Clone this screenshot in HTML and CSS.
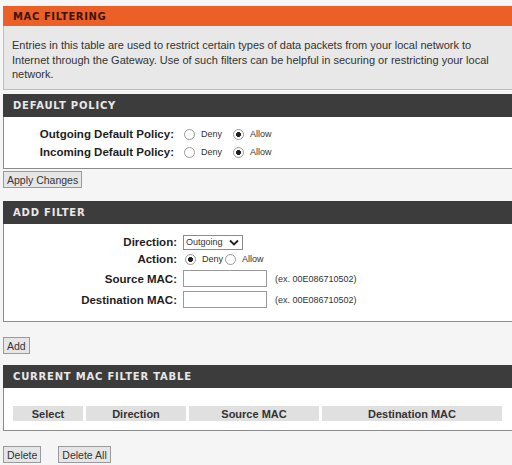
FILE: index.html
```html
<!DOCTYPE html>
<html>

<head>
  <title>MAC Filtering</title>
  <meta name="viewport" content="width=device-width, initial-scale=1" />
  <link rel="stylesheet" href="styles.css">
</head>

<body>

  <div class="page">

    <section class="intro">
      <h1 class="intro-head">MAC FILTERING</h1>
      <p class="intro-text">Entries in this table are used to restrict certain types of data packets from your local network to Internet through the Gateway. Use of such filters can be helpful in securing or restricting your local network.</p>
    </section>

    <section class="panel">
      <h2 class="panel-head">DEFAULT POLICY</h2>
      <div class="panel-body form policy">
        <span class="form-label">Outgoing Default Policy:</span>
        <div class="opts">
          <label class="opt"><input type="radio" name="out"> Deny</label>
          <label class="opt"><input type="radio" name="out" checked> Allow</label>
        </div>
        <span class="form-label">Incoming Default Policy:</span>
        <div class="opts">
          <label class="opt"><input type="radio" name="in"> Deny</label>
          <label class="opt"><input type="radio" name="in" checked> Allow</label>
        </div>
      </div>
    </section>

    <div class="actions actions-tight">
      <button class="btn">Apply Changes</button>
    </div>

    <section class="panel">
      <h2 class="panel-head">ADD FILTER</h2>
      <div class="panel-body form filter">
        <span class="form-label">Direction:</span>
        <div class="field">
          <div class="select">Outgoing
            <svg width="10" height="7" viewBox="0 0 10 7"><path d="M1 1.5 L5 5.5 L9 1.5" fill="none" stroke="#222" stroke-width="1.8"/></svg>
          </div>
        </div>
        <span class="form-label">Action:</span>
        <div class="field">
          <label class="opt"><input type="radio" name="act" checked> Deny</label><label class="opt"><input type="radio" name="act"> Allow</label>
        </div>
        <span class="form-label">Source MAC:</span>
        <div class="field">
          <input class="text-input" type="text">
          <span class="hint">(ex. 00E086710502)</span>
        </div>
        <span class="form-label">Destination MAC:</span>
        <div class="field">
          <input class="text-input" type="text">
          <span class="hint">(ex. 00E086710502)</span>
        </div>
      </div>
    </section>

    <div class="actions actions-add">
      <button class="btn">Add</button>
    </div>

    <section class="panel">
      <h2 class="panel-head">CURRENT MAC FILTER TABLE</h2>
      <div class="panel-body table-wrap">
        <table class="mac-table">
          <tr>
            <th class="col-select">Select</th>
            <th class="col-dir">Direction</th>
            <th class="col-src">Source MAC</th>
            <th>Destination MAC</th>
          </tr>
        </table>
      </div>
    </section>

    <div class="actions actions-bottom">
      <button class="btn">Delete</button>
      <button class="btn">Delete All</button>
    </div>

  </div>

</body>

</html>
```

FILE: styles.css
```css
html,
body {
  margin: 0;
  padding: 0;
  background-color: #f5f5f5;
  overflow: hidden;
}

.page {
  width: 512px;
  padding: 6px 0 0 3px;
  font-family: "Liberation Sans", Arial, sans-serif;
  font-size: 11px;
  color: #222;
}

/* orange intro block */
.intro {
  margin-bottom: 4px;
}

.intro-head {
  margin: 0;
  height: 20px;
  line-height: 21px;
  padding-left: 10px;
  background-color: #ec5f27;
  color: #3b1506;
  font-family: "DejaVu Sans", Verdana, sans-serif;
  font-size: 10px;
  font-weight: bold;
  letter-spacing: 0.6px;
}

.intro-text {
  margin: 0;
  height: 64px;
  box-sizing: border-box;
  padding: 12px 8px 0 8px;
  background-color: #e8e8e8;
  border: 1px solid #eeb08c;
  border-top: none;
  line-height: 14.5px;
  font-size: 11px;
  color: #333;
}

/* dark panels */
.panel-head {
  margin: 0;
  height: 23px;
  line-height: 24px;
  padding-left: 10px;
  background-color: #3c3c3c;
  color: #e8e8e8;
  font-family: "DejaVu Sans", Verdana, sans-serif;
  font-size: 10px;
  font-weight: bold;
  letter-spacing: 0.8px;
}

.panel-body {
  background-color: #fff;
  border: 1px solid #8c8c8c;
  border-top: none;
}

.form {
  display: grid;
  grid-template-columns: 170px 1fr;
  column-gap: 8px;
  align-items: center;
}

.form-label {
  text-align: right;
  font-weight: bold;
  font-size: 11.5px;
  color: #1e1e1e;
}

.policy {
  padding: 8px 0 7px;
  grid-auto-rows: 18px;
}

.opts {
  display: flex;
  gap: 9px;
}

.opt {
  display: inline-flex;
  align-items: center;
  font-size: 9px;
  color: #333;
}

.opt input {
  appearance: none;
  -webkit-appearance: none;
  margin: 0 6px 0 2px;
  width: 11px;
  height: 11px;
  box-sizing: border-box;
  border: 1px solid #9a9a9a;
  border-radius: 50%;
  background-color: #fff;
}

.opt input:checked {
  background-image: radial-gradient(circle, #222 0, #222 2.2px, #fff 2.8px);
}

.filter {
  padding: 10px 0 11px;
  grid-template-rows: 16px 18px 21px 21px;
  grid-template-columns: 173px 1fr;
  column-gap: 6px;
}

.field {
  display: flex;
  align-items: center;
}

.select {
  display: inline-flex;
  align-items: center;
  gap: 6px;
  height: 13px;
  padding: 0 3px 0 2px;
  border: 1px solid #8a8a8a;
  background-color: #fff;
  font-size: 9px;
  color: #333;
}

.text-input {
  width: 84px;
  height: 17px;
  box-sizing: border-box;
  margin: 0;
  border: 1px solid #9a9a9a;
  background-color: #fff;
}

.hint {
  margin-left: 8px;
  font-size: 9px;
  color: #333;
}

/* buttons */
.actions {
  display: flex;
  gap: 17px;
}

.actions-tight {
  margin: 2px 0 13px;
}

.actions-add {
  margin: 15px 0 11px;
}

.actions-bottom {
  margin-top: 15px;
}

.btn {
  height: 17px;
  padding: 0 3px;
  border: 1px solid #9a9a9a;
  background-color: #e6e6e6;
  font-family: "Liberation Sans", Arial, sans-serif;
  font-size: 10.5px;
  color: #333;
}

/* filter table */
.table-wrap {
  padding: 18px 9px 9px 6px;
}

.mac-table {
  width: 100%;
  border-spacing: 3px 0;
}

.mac-table th {
  height: 15px;
  padding: 0;
  background-color: #e0e0e0;
  font-size: 11px;
  font-weight: bold;
  color: #333;
}

.col-select {
  width: 70px;
}

.col-dir {
  width: 100px;
}

.col-src {
  width: 130px;
}
```
